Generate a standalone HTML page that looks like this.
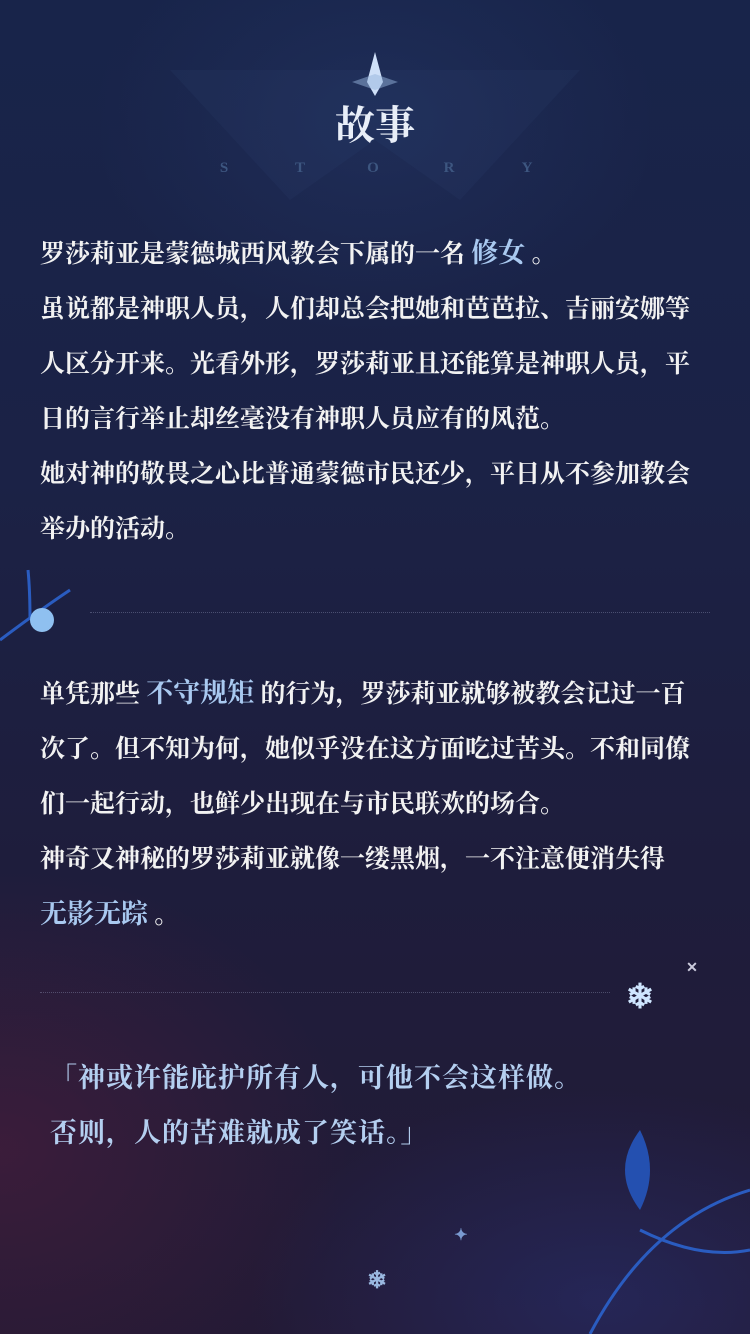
<!DOCTYPE html>
<html><head><meta charset="utf-8"><style>
html,body{margin:0;padding:0}
body{width:750px;height:1334px;position:relative;overflow:hidden;
background:
radial-gradient(ellipse 500px 400px at 0px 1150px, rgba(80,30,60,.55), transparent 70%),
radial-gradient(ellipse 500px 300px at 600px 1300px, rgba(40,50,120,.5), transparent 70%),
radial-gradient(ellipse 400px 300px at 375px 120px, rgba(40,60,110,.4), transparent 70%),
linear-gradient(180deg,#18244a 0%,#1b2246 35%,#1e1d3c 65%,#231a35 100%);
font-family:"Liberation Serif","Noto Serif CJK SC",serif;color:#f2f2f2;font-weight:bold}
.t{position:absolute;left:40px;width:700px;font-size:25px;line-height:55px;white-space:nowrap}
.h{color:#a9c9f0;font-size:27px}
.dot{position:absolute;height:0;border-top:1px dotted rgba(160,170,200,.35)}
.q{position:absolute;left:50px;font-size:27px;color:#b4cff0;line-height:55px;letter-spacing:1px;white-space:nowrap}
</style></head><body>
<svg style="position:absolute;left:0;top:0" width="750" height="1334">
<polygon points="170,70 580,70 460,200 375,140 290,200" fill="rgba(60,85,140,.1)"/>
<polygon points="375,52 383,82 375,96 367,82" fill="#cfe0f8"/>
<polygon points="352,82 375,74 398,82 375,90" fill="rgba(150,180,220,.5)"/>
<g stroke="#2a5cc0" stroke-width="3" fill="none">
<path d="M0,640 Q40,610 70,590"/><path d="M30,620 Q30,590 28,570"/>
<path d="M750,1190 Q650,1220 590,1334"/><path d="M640,1230 Q700,1260 750,1250"/>
</g>
<circle cx="42" cy="620" r="12" fill="#8fc0f0"/>
<path d="M640,1130 Q610,1170 640,1210 Q660,1170 640,1130Z" fill="#2450b0"/>
<text x="640" y="1008" font-size="34" fill="#cfe6ff" text-anchor="middle">❄</text>
<text x="377" y="1288" font-size="24" fill="#9ab8e0" text-anchor="middle">❄</text>
<text x="692" y="972" font-size="14" fill="#ccd" text-anchor="middle">✕</text>
<text x="461" y="1240" font-size="16" fill="#7a9ad0" text-anchor="middle">✦</text>
<g font-size="15" fill="#3d5680" text-anchor="middle" font-family="Liberation Serif,serif" font-weight="bold">
<text x="224" y="172">S</text><text x="300" y="172">T</text><text x="373" y="172">O</text><text x="449" y="172">R</text><text x="527" y="172">Y</text></g>
</svg>
<div style="position:absolute;left:0;width:750px;top:94px;text-align:center;font-size:40px;color:#e8eef8">故事</div>
<div class="t" style="top:226px">罗莎莉亚是蒙德城西风教会下属的一名 <span class="h">修女</span> 。<br>虽说都是神职人员，人们却总会把她和芭芭拉、吉丽安娜等<br>人区分开来。光看外形，罗莎莉亚且还能算是神职人员，平<br>日的言行举止却丝毫没有神职人员应有的风范。<br>她对神的敬畏之心比普通蒙德市民还少，平日从不参加教会<br>举办的活动。</div>
<div class="dot" style="top:612px;left:90px;width:620px"></div>
<div class="t" style="top:666px">单凭那些 <span class="h">不守规矩</span> 的行为，罗莎莉亚就够被教会记过一百<br>次了。但不知为何，她似乎没在这方面吃过苦头。不和同僚<br>们一起行动，也鲜少出现在与市民联欢的场合。<br>神奇又神秘的罗莎莉亚就像一缕黑烟，一不注意便消失得<br><span class="h">无影无踪</span> 。</div>
<div class="dot" style="top:992px;left:40px;width:570px"></div>
<div class="q" style="top:1051px">「神或许能庇护所有人，可他不会这样做。<br>否则，人的苦难就成了笑话。」</div>
</body></html>
